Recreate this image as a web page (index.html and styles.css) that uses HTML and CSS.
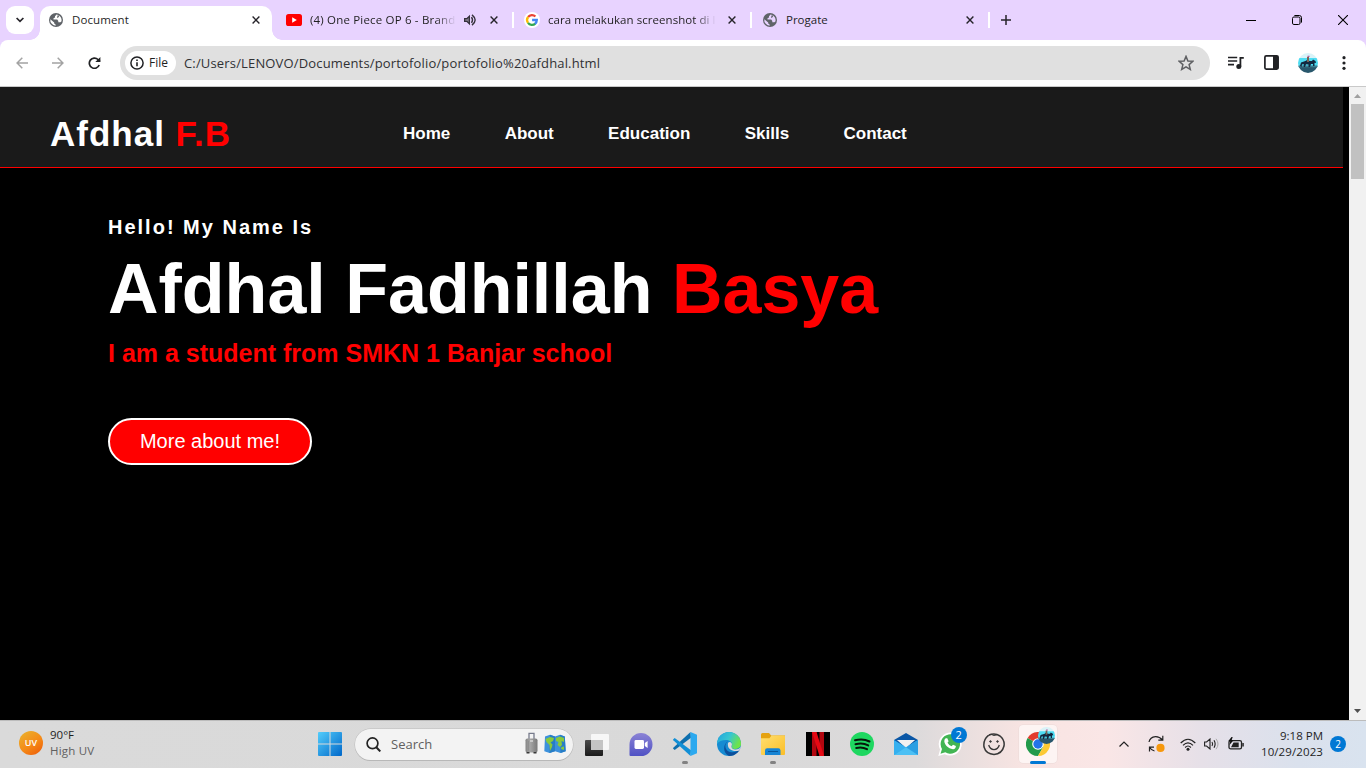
FILE: index.html
```html
<!DOCTYPE html>
<html lang="en">
<head>
<meta charset="utf-8">
<title>Document</title>
<link rel="stylesheet" href="styles.css">
</head>
<body>
<svg class="defs" width="0" height="0">
  <defs>
    <symbol id="globe" viewBox="0 0 14 14"><circle cx="7" cy="7" r="7" fill="#5f6368"/><path d="M7.6 1.5 6 3.2V4.6L4.5 5.2V6.6H8.2L9.3 8V9.2H11.4L12.4 8.6A5.7 5.7 0 0 0 7.6 1.5Z" fill="var(--hole)"/><path d="M1.3 6.2 5.2 9.4V10.6L6.6 11.6V12.7A5.8 5.8 0 0 1 1.3 6.2Z" fill="var(--hole)"/><path d="M8.6 2.2 10.4 2.6 9.6 4.3 8 4.9Z" fill="#5f6368"/></symbol>
    <symbol id="close" viewBox="0 0 8 8"><path d="M.6.6 7.4 7.4M7.4.6.6 7.4" stroke="#26242a" stroke-width="1.4"/></symbol>
    <symbol id="avatar" viewBox="0 0 20 20"><clipPath id="round"><circle cx="10" cy="10" r="10"/></clipPath><g clip-path="url(#round)"><path fill="#d9f3f8" d="M0 0h20v6H0z"/><path fill="#4edcf2" d="M0 5h20v8H0z"/><path fill="#28576c" d="M0 13h20v7H0z"/><path fill="#3c7f91" d="M0 12.6h20v1.6H0z"/><path fill="#13283f" d="M2 13 3 9.5 6 8.5 8 7.8 9.5 6.5 11.5 8H14L15 6.5 17.5 8 18 10 16.5 9.7V13H15V11H13L12 14H10.5V11.5L8 11.2 7 14H5.7V11L4 11.5 3.5 14Z"/><path fill="#7b6353" d="M9 4h2v5H9z"/><path fill="#b75da5" d="M9.5 2.8h2V4h-2z"/></g></symbol>
    <linearGradient id="win" x1="0" y1="0" x2="1" y2="1"><stop stop-color="#53cdfb"/><stop offset="1" stop-color="#0067c9"/></linearGradient>
    <linearGradient id="chat" x1="0" y1="0" x2="0" y2="1"><stop stop-color="#8b83d5"/><stop offset="1" stop-color="#5052c4"/></linearGradient>
    <linearGradient id="edgeTop" x1="0" y1="0" x2="1" y2=".4"><stop stop-color="#1fa3df"/><stop offset=".55" stop-color="#37c6d0"/><stop offset="1" stop-color="#6ee34b"/></linearGradient>
    <linearGradient id="folder" x1="0" y1="0" x2="1" y2="1"><stop stop-color="#ffdf70"/><stop offset="1" stop-color="#fbbe27"/></linearGradient>
    <linearGradient id="task" x1="0" y1="0" x2="0" y2="1"><stop stop-color="#4b4b4b"/><stop offset="1" stop-color="#1a1a1a"/></linearGradient>
    <linearGradient id="bag" x1="0" y1="0" x2="1" y2="0"><stop stop-color="#858585"/><stop offset=".4" stop-color="#a6a6a6"/><stop offset="1" stop-color="#7a7a7a"/></linearGradient>
  </defs>
</svg>

<div class="tabstrip">
  <div class="tab-search"><svg width="8" height="6" viewBox="0 0 8 6"><path d="M.6 1 4 4.4 7.4 1" fill="none" stroke="#26242a" stroke-width="1.7"/></svg></div>
  <div class="tab active">
    <svg class="favicon" width="14" height="14"><use href="#globe"/></svg>
    <span class="tab-title t-doc">Document</span>
    <svg class="close" width="8" height="8"><use href="#close"/></svg>
  </div>
  <div class="tab t2">
    <svg width="16" height="12" viewBox="0 0 16 12"><rect width="16" height="12" rx="2.6" fill="#f00"/><path d="M6.2 3.3v5.4L10.8 6Z" fill="#fff"/></svg>
    <span class="tab-title t-yt fade">(4) One Piece OP 6 - Brand</span>
    <svg class="sound" width="12" height="12" viewBox="0 0 12 12"><path d="M0 4h2.6L6 .8v10.4L2.6 8H0Z" fill="#35313b"/><path d="M1.3 5.2h1.9L4.7 3.8v4.4L3.2 6.8H1.3Z" fill="#88808f"/><path d="M7.5 3.2Q9.5 6 7.5 8.8M8 .9Q14.3 6 8 11.1" fill="none" stroke="#35313b" stroke-width="1.4"/></svg>
    <svg class="close" width="8" height="8"><use href="#close"/></svg>
  </div>
  <div class="tab t3">
    <svg width="16" height="16" viewBox="0 0 16 16"><circle cx="8" cy="8" r="8" fill="#fff"/><g fill="none" stroke-width="2.3"><path d="M4.1 5A4.9 4.9 0 0 1 11.4 4.5" stroke="#ea4335"/><path d="M4.1 5A4.9 4.9 0 0 0 4 10.8" stroke="#fbbc05"/><path d="M4 10.8A4.9 4.9 0 0 0 11.3 11.6" stroke="#34a853"/><path d="M8.1 8H12.8A4.8 4.8 0 0 1 11 11.8" stroke="#4285f4"/></g></svg>
    <span class="tab-title t-google fade">cara melakukan screenshot di l</span>
    <svg class="close" width="8" height="8"><use href="#close"/></svg>
  </div>
  <div class="tab t4">
    <svg class="favicon" width="14" height="14"><use href="#globe"/></svg>
    <span class="tab-title t-pro">Progate</span>
    <svg class="close" width="8" height="8"><use href="#close"/></svg>
  </div>
  <svg class="plus" width="10" height="10" viewBox="0 0 10 10"><path d="M5 0v10M0 5h10" stroke="#26242a" stroke-width="1.5"/></svg>
  <div class="win-controls">
    <svg width="10" height="11" viewBox="0 0 10 11"><path d="M0 5.5h10" stroke="#000"/></svg>
    <svg width="10" height="10" viewBox="0 0 10 10" fill="none" stroke="#000"><rect x=".5" y="2" width="7.5" height="7.5" rx="1.4"/><path d="M2.4.5H7.3Q9.5.5 9.5 2.7V7.6"/></svg>
    <svg width="10" height="10" viewBox="0 0 10 10"><path d="M0 0 10 10M10 0 0 10" stroke="#000" stroke-width="1.1"/></svg>
  </div>
</div>

<div class="toolbar-wrap">
<div class="toolbar">
  <svg class="nav-ic" width="12" height="12" viewBox="0 0 12 12"><path d="M12 6H1.2M6.3.8 1.1 6l5.2 5.2" fill="none" stroke="#a3a3a3" stroke-width="1.5"/></svg>
  <svg class="nav-ic" width="12" height="12" viewBox="0 0 12 12"><path d="M0 6H10.8M5.7.8 10.9 6l-5.2 5.2" fill="none" stroke="#a3a3a3" stroke-width="1.5"/></svg>
  <svg class="nav-ic" width="13" height="12" viewBox="0 0 13 12"><path d="M11.2 8A5.1 5.1 0 1 1 10 2.5L12 4.5" fill="none" stroke="#202124" stroke-width="1.7"/><path d="M12.4 0V5.1H7.3Z" fill="#202124"/></svg>
  <div class="omnibox">
    <div class="chip"><svg width="14" height="14" viewBox="0 0 14 14"><circle cx="7" cy="7" r="6.1" fill="none" stroke="#202124" stroke-width="1.5"/><path d="M7 6.2v4M7 3.6v1.5" stroke="#202124" stroke-width="1.6"/></svg><span class="file">File</span></div>
    <span class="url">C:/Users/LENOVO/Documents/portofolio/portofolio%20afdhal.html</span>
    <svg class="star" width="16" height="16" viewBox="0 0 16 16"><path d="M8 1.4 9.9 6 14.9 6.3 11.1 9.6 12.3 14.4 8 11.8 3.7 14.4 4.9 9.6 1.1 6.3 6.1 6Z" fill="none" stroke="#5f6063" stroke-width="1.5"/></svg>
  </div>
  <div class="actions">
    <svg width="16" height="14" viewBox="0 0 16 14"><path d="M0 1.5h9.2M0 5h9.2M0 8.6h6" stroke="#202124" stroke-width="1.6"/><path d="M11.5 10.5V.9h4.3v1.9h-2.5v7.7Z" fill="#202124"/><circle cx="10.8" cy="10.4" r="2.5" fill="#202124"/></svg>
    <svg width="15" height="15" viewBox="0 0 15 15"><rect x=".9" y=".9" width="13.2" height="13.2" rx="1.3" fill="none" stroke="#202124" stroke-width="1.7"/><path d="M9 1h5.2v13H9z" fill="#202124"/></svg>
    <svg width="20" height="20"><use href="#avatar"/></svg>
    <svg width="4" height="14" viewBox="0 0 4 14" fill="#202124"><circle cx="2" cy="1.7" r="1.6"/><circle cx="2" cy="7" r="1.6"/><circle cx="2" cy="12.3" r="1.6"/></svg>
  </div>
</div>
</div>

<div class="view">
  <main class="page">
    <nav class="navbar">
      <div class="brand">Afdhal <span class="red">F.B</span></div>
      <ul class="menu"><li>Home</li><li>About</li><li>Education</li><li>Skills</li><li>Contact</li></ul>
    </nav>
    <section class="hero">
      <h4 class="hello">Hello! My Name Is</h4>
      <h1 class="name">Afdhal Fadhillah <span class="red">Basya</span></h1>
      <h3 class="role">I am a student from SMKN 1 Banjar school</h3>
      <a class="more">More about me!</a>
    </section>
  </main>
  <div class="scrollbar">
    <svg width="7" height="4" viewBox="0 0 7 4"><path d="M0 4 3.5 0 7 4Z" fill="#a0a0a0"/></svg>
    <div class="thumb"></div>
    <svg class="down" width="7" height="4" viewBox="0 0 7 4"><path d="M0 0 3.5 4 7 0Z" fill="#505050"/></svg>
  </div>
</div>

<footer class="taskbar">
  <div class="weather">
    <div class="uv">UV</div>
    <div class="weather-text"><span class="temp">90°F</span><span class="uvtxt">High UV</span></div>
  </div>
  <div class="dock">
    <svg class="start" width="24" height="24" viewBox="0 0 24 24" fill="url(#win)"><path d="M0 1q0-1 1-1h10.5v11.5H0ZM12.5 0H23q1 0 1 1v10.5H12.5ZM0 12.5h11.5V24H1q-1 0-1-1ZM12.5 12.5H24V23q0 1-1 1H12.5Z"/></svg>
    <div class="search">
      <svg width="15" height="15" viewBox="0 0 15 15"><circle cx="6.5" cy="6.3" r="5.4" fill="none" stroke="#222" stroke-width="1.7"/><path d="m10.3 10.2 4 4.2" stroke="#222" stroke-width="2"/></svg>
      <span class="search-text">Search</span>
      <svg class="case" width="13" height="22" viewBox="0 0 13 22"><path d="M4 8V1.3h5V8" fill="none" stroke="#777b8c" stroke-width="1.3"/><rect x=".5" y="6.5" width="12" height="14" rx="1.8" fill="url(#bag)"/><path d="M3.5 9v9.500M9.500 9v9.500" stroke="#8c8c8c" stroke-width=".8"/><path d="M5 8h3v2H5z" fill="#c9c9c9"/><path d="M1.5 20h3v1.5h-3zM8.5 20h3v1.5h-3z" fill="#383838"/></svg>
      <svg width="22" height="20" viewBox="0 0 22 20"><path d="M1 2.5 6 .8l5 1.7 5-1.7L20.8 2.5 21.7 17.2 16.5 19 11 17.3 5.5 19 .3 17.2Z" fill="#3c91dc"/><path d="M6 .8 11 2.5V17.3L5.5 19ZM16 .8 20.8 2.5 21.7 17.2 16.5 19Z" fill="#287dc6"/><path d="M1.500 5 6 3 10 4 9 7 6.500 8.500 8.500 10.500 8 13 6 17 5.500 11 2.500 8ZM12 4 16 2.500 20 4V8L17.500 7 18 11 16 13 13.500 11 14.500 8 12 7ZM17.500 13 20 12.500V16L17 15Z" fill="#87c93d"/></svg>
    </div>
    <div class="app"><svg width="24" height="24" viewBox="0 0 24 24"><rect y="8" width="18" height="16" rx="1" fill="url(#task)"/><rect x="6" y="2" width="18" height="16" rx="1" fill="#f7f7f7"/><path d="M6 8h12v10H7q-1 0-1-1Z" fill="#c4c4c4"/></svg></div>
    <div class="app"><svg width="24" height="24" viewBox="0 0 24 24"><path d="M12 1A11.5 11.5 0 1 1 12 24H1.6Q.4 24 .5 22.8V12.5A11.5 11.5 0 0 1 12 1Z" fill="url(#chat)"/><rect x="5.5" y="8" width="9.5" height="9" rx="1.4" fill="#fff"/><path d="m15.8 11 2.8-2.1v7.2L15.8 14Z" fill="#fff"/></svg></div>
    <div class="app running"><svg width="24" height="24" viewBox="0 0 24 24"><path d="M17.5 0 .3 15.700Q-.2 16.300.3 16.800L1.700 18 18 5.700Z" fill="#0d6fae"/><path d="M18 18.200 1.700 6 .3 7.200Q-.2 7.700.3 8.300L17.500 24Z" fill="#118fd6"/><path d="M17.500 0 24 2.800V21.200L17.500 24Z" fill="#2ca9ef"/></svg></div>
    <div class="app"><svg width="24" height="24" viewBox="0 0 24 24"><clipPath id="ec"><circle cx="12" cy="12" r="12"/></clipPath><g clip-path="url(#ec)"><path d="M0 0h24v24H0z" fill="#168bd2"/><path d="M0 11V0H24V13.500C23 16 20.500 17 17.500 16.900 14.500 16.600 14 15 15 13.800 16 10.500 13 8 9 8 5 8 1.500 9.500 0 12Z" fill="url(#edgeTop)"/><path d="M11 9.300C7 12 7.500 18.500 13 20 17 21 20.500 19.500 24 16.500V24H12C5.500 21 6 12 11 9.300Z" fill="#0c4f9b"/><path d="M11.300 10.500C13 9 15.500 11 14.900 13 13.700 15.200 15 17.300 18 17.500 20.500 17.700 23 16.500 24 14.500V17.500C20 20.500 12 19 11 14Q10.500 11.500 11.300 10.500Z" fill="#dadada"/></g></svg></div>
    <div class="app running"><svg width="24" height="24" viewBox="0 0 24 24"><path d="M0 2.5Q0 1 1.5 1H8l2.200 2.400H24V10H0Z" fill="#e5a211"/><path d="M0 6.200H8.500L10.500 3.400H23q1 0 1 1V22q0 1-1 1H1q-1 0-1-1Z" fill="url(#folder)"/><path d="M4 23v-4.500Q4 16.300 6.200 16.300H17.300q2.200 0 2.200 2.200V23Z" fill="#1684d4"/><path d="M7 19.500h10" stroke="#07569b"/></svg></div>
    <div class="app"><svg width="24" height="24" viewBox="0 0 24 24"><path d="M0 0h24v24H0z"/><path d="M6 0h4.500v24H6zM13.500 0H18v24h-4.500z" fill="#b20710"/><path d="M6 0h4.500L18 24h-4.500Z" fill="#e50914"/></svg></div>
    <div class="app"><svg width="24" height="24" viewBox="0 0 24 24"><circle cx="12" cy="12" r="12" fill="#1ed760"/><path d="M5 8.300Q13 6 19.500 9.500M5.500 12.300Q12.500 10.300 18.200 13.400M6.200 16Q12 14.500 17 17.200" fill="none" stroke="#06170b" stroke-width="2" stroke-linecap="round"/></svg></div>
    <div class="app"><svg width="24" height="24" viewBox="0 0 24 24"><path d="M0 8 12 1 24 8V14H0Z" fill="#0a57a6"/><path d="M3 8h18l-9 8z" fill="#eee"/><path d="M0 8 12 15.300 24 8V23H0Z" fill="#35b0ef"/><path d="M3.500 8h17L12 14.500Z" fill="#f1f1f1"/><path d="M0 23 24 8V23Z" fill="#2b9fe3"/><path d="M0 23 12 15.300 24 23Z" fill="#4cc0f4"/></svg></div>
    <div class="app wa"><svg width="24" height="24" viewBox="0 0 24 24"><path d="M.3 24 2.100 17.600A11.500 11.500 0 1 1 6.700 22.200Z" fill="#fff"/><path d="M2.500 21.700 4 17A9.700 9.700 0 1 1 7.300 20.300Z" fill="#42b553"/><path d="M7.800 6.200 9.300 6.300 10.600 9.300 9.500 10.800Q10.800 13.300 13.600 14.300L15 12.700 17.900 14.100Q17.800 17.300 14.900 17.200C10.300 16.800 6.200 12.300 6.300 9Q6.400 7 7.800 6.200Z" fill="#fff"/></svg><span class="badge">2</span></div>
    <div class="app"><svg width="24" height="24" viewBox="0 0 24 24" fill="none" stroke="#383838"><path d="M7 3Q13 .7 18 4 23 8 22 14 20 22 12 22.500 4 22 2 15 1 8 6.200 3.700" stroke-width="1.500"/><path d="M5.800 3.700 9 2.300 12 3.500 15 2.800" stroke-width="1.100"/><circle cx="8.500" cy="9.500" r=".8" fill="#383838"/><circle cx="15.500" cy="9.500" r=".8" fill="#383838"/><path d="M6.700 13Q8 17.600 12 17.600T17.300 13" stroke-width="1.300"/></svg></div>
    <div class="app chrome"><svg width="24" height="24" viewBox="0 0 24 24"><path d="M12 12 1.600 6A12 12 0 0 1 22.400 6Z" fill="#e33b2e"/><path d="M12 12 1.600 6A12 12 0 0 0 12 24L17.200 15Z" fill="#229a4b"/><path d="M12 6H22.400A12 12 0 0 1 12 24L17.200 15Z" fill="#fcc934"/><circle cx="12" cy="12" r="5.800" fill="#fff"/><circle cx="12" cy="12" r="4.700" fill="#2474e8"/></svg><svg class="mini" width="17" height="17" viewBox="0 0 20 20"><use href="#avatar" width="20" height="20"/></svg></div>
  </div>
  <div class="tray">
    <svg class="up" width="10" height="6" viewBox="0 0 10 6"><path d="M.5 5.500 5 1l4.500 4.500" fill="none" stroke="#222" stroke-width="1.200"/></svg>
    <svg class="sync" width="17" height="18" viewBox="0 0 17 18"><path d="M1 7Q2 2 7.500 1.600 11.500 1.500 14.500 5M14.800.8V5.200H10.300M1.500 16.500V12.200H6M1.700 12.500Q3.500 15.500 6.500 16" fill="none" stroke="#222" stroke-width="1.200"/><circle cx="12.500" cy="12.900" r="4.100" fill="#f7980d"/></svg>
    <svg class="wifi" width="16" height="13" viewBox="0 0 16 13"><path d="M.7 5Q8-2.500 15.300 5M3 7.300Q8 2.300 13 7.300M5.100 9.500Q8 6.500 10.900 9.500" fill="none" stroke="#222" stroke-width="1.200"/><circle cx="8" cy="11.200" r="1.500" fill="#222"/></svg>
    <svg class="vol" width="15" height="12" viewBox="0 0 15 12"><path d="M.6 4h2L6 1v10L2.600 8h-2Z" fill="none" stroke="#222" stroke-width="1.100"/><path d="M8 4Q9.300 6 8 8M10 2.300Q12.300 6 10 9.700" fill="none" stroke="#222" stroke-width="1.100"/><path d="M12 .8Q16 6 12 11.200" fill="none" stroke="#aaa"/></svg>
    <svg class="bat" width="16" height="13" viewBox="0 0 16 13"><rect x="1" y="3.600" width="12.500" height="8.300" rx="1.700" fill="none" stroke="#222" stroke-width="1.300"/><path d="M3 10.200 5.500 5.400H10.700V10.200ZM14.300 6h1.500v3.600h-1.500z" fill="#222"/><path d="M3.500 0 .2 4.300h2L1.500 8 5.500 3.200H3.600L4.700 0Z" fill="#111"/></svg>
    <div class="clock"><span class="time">9:18 PM</span><span class="date">10/29/2023</span></div>
    <span class="notif">2</span>
  </div>
</footer>
</body>
</html>
```

FILE: styles.css
```css
* { box-sizing: border-box; }
body { margin: 0; width: 1366px; height: 768px; overflow: hidden; display: flex; flex-direction: column; background: #fff; font-family: "Open Sans", "Noto Sans", sans-serif; color: #1f1f1f; }
svg { display: block; flex: none; }
.defs { position: absolute; }
span { white-space: nowrap; }

/* Browser tabs */
.tabstrip { height: 40px; flex: none; display: flex; align-items: center; background: #e8d3ff; --hole: #e8d3ff; }
.tab-search { width: 28px; height: 28px; margin: 0 6px; border-radius: 9px; background: #fff; display: flex; align-items: center; justify-content: center; }
.tab { display: flex; align-items: center; height: 34px; font-size: 11.5px; }
.tab.active { position: relative; --hole: #fff; align-self: flex-end; width: 232px; padding: 0 12px 6px 9px; background: #fff; border-radius: 10px 10px 0 0; }
.tab.active::before, .tab.active::after { content: ""; position: absolute; bottom: 0; width: 10px; height: 10px; }
.tab.active::before { left: -10px; background: radial-gradient(circle at 0 0, transparent 9.5px, #fff 10px); }
.tab.active::after { right: -10px; background: radial-gradient(circle at 100% 0, transparent 9.5px, #fff 10px); }
.tab-title { line-height: 16px; margin-left: 9px; overflow: hidden; }
.t-doc { letter-spacing: .1px; }
.close { margin-left: auto; }
.t2, .t3, .t4 { height: 16px; border-right: 2px solid #fff; }
.t2 { width: 242px; padding: 0 14px; }
.t2 .tab-title { width: 146px; margin-left: 8px; letter-spacing: .18px; }
.sound { margin-left: 8px; }
.t3 { width: 238px; padding: 0 14px 0 10px; }
.t3 .tab-title { width: 168px; margin-left: 8px; letter-spacing: .05px; }
.t4 { width: 238px; padding: 0 14px 0 11px; }
.fade { -webkit-mask-image: linear-gradient(90deg, #000 calc(100% - 20px), transparent); mask-image: linear-gradient(90deg, #000 calc(100% - 20px), transparent); }
.plus { margin-left: 11px; }
.win-controls { margin-left: auto; padding-right: 18px; display: flex; gap: 36px; align-items: center; }

/* Address bar */
.toolbar-wrap { flex: none; background: #e8d3ff; }
.toolbar { height: 47px; display: flex; align-items: center; padding: 0 20px 1px 16px; background: #fff; border-bottom: 1px solid #c9c9c9; border-radius: 8px 8px 0 0; }
.nav-ic { margin-right: 24px; }
.nav-ic:nth-child(3) { margin-right: 19px; }
.omnibox { width: 1090px; height: 34px; border-radius: 17px; background: #e0e0e0; display: flex; align-items: center; padding: 0 16px 0 5px; }
.chip { width: 51px; height: 24px; border-radius: 12px; background: #fff; display: flex; align-items: center; padding-left: 5px; gap: 5px; font-size: 12px; }
.url { margin-left: 8px; font-size: 13px; letter-spacing: .16px; color: #303134; }
.star { margin-left: auto; }
.actions { margin-left: auto; display: flex; align-items: center; }
.actions svg:nth-child(1) { margin-right: 20px; }
.actions svg:nth-child(2) { margin-right: 19px; }
.actions svg:nth-child(3) { margin-right: 24px; }

/* Portfolio page */
.view { height: 633px; flex: none; display: flex; background: #000; font-family: "Liberation Sans", Arial, sans-serif; }
.page { flex: 1; color: #fff; }
.red { color: #f00; }
.navbar { width: 1343px; height: 81px; display: flex; align-items: center; padding: 14px 0 0 50px; background: #1a1a1a; border-bottom: 1px solid #f00; }
.brand { width: 353px; font-size: 35px; font-weight: 700; letter-spacing: 1px; }
.menu { list-style: none; margin: 0; padding: 0; display: flex; gap: 54.4px; font-size: 17px; font-weight: 700; }
.hero { padding: 47px 0 0 108px; display: flex; flex-direction: column; align-items: flex-start; }
.hello { margin: 0; font-size: 20px; line-height: 24px; letter-spacing: 2px; }
.name { margin: 10px 0 0; font-size: 70px; line-height: 80px; white-space: nowrap; }
.role { margin: 9px 0 0; font-size: 25px; line-height: 30px; color: #f00; }
.more { margin-top: 49.5px; width: 204px; height: 47px; padding-top: 1px; border: 2px solid #fff; border-radius: 24px; background: #f00; font-size: 20px; display: flex; align-items: center; justify-content: center; }
.scrollbar { width: 17px; background: #f1f1f1; display: flex; flex-direction: column; align-items: center; padding: 7px 0; }
.thumb { width: 13px; height: 75px; margin-top: 6px; background: #c1c1c1; }
.down { margin-top: auto; }

/* Taskbar */
.taskbar { height: 48px; flex: none; display: flex; align-items: center; padding-bottom: 1px; border-top: 1px solid #bcbcbc; background: linear-gradient(90deg, #dadada 0, #d9d9d9 55%, #dcdadb 67%, #f8e4e2 75%, #fae6e6 81%, #e6e0e8 88%, #dae1ed 95%, #d9e3ef 100%); }
.weather { width: 317.5px; padding: 0 0 2px 19px; display: flex; align-items: center; }
.uv { width: 24px; height: 24px; border-radius: 50%; background: linear-gradient(145deg, #e9b52f, #f58a17 55%, #ec5809); color: #fff; font-size: 9px; font-weight: 600; line-height: 24px; text-align: center; }
.weather-text { margin-left: 7px; display: flex; flex-direction: column; align-items: flex-start; font-size: 11.5px; line-height: 16px; }
.uvtxt { color: #606060; letter-spacing: .2px; }
.dock { display: flex; align-items: center; }
.search { width: 218px; height: 31px; margin: 0 2px 0 13.5px; border-radius: 16px; background: #f3f3f3; box-shadow: 0 0 0 .5px #bbb, 0 1px 0 #b5b5b5; display: flex; align-items: center; padding: 0 7px 0 11px; }
.search-text { margin-left: 10px; font-size: 13px; color: #606060; }
.case { margin: 0 6px 2px auto; }
.app { position: relative; width: 44.1px; height: 40px; display: flex; align-items: center; justify-content: center; }
.running::after { content: ""; position: absolute; bottom: 0; width: 6px; height: 3px; border-radius: 2px; background: #828282; }
.badge { position: absolute; left: 23px; top: 3px; width: 16px; height: 16px; border-radius: 50%; background: #0078d4; color: #fff; font-size: 11px; line-height: 16px; text-align: center; }
.chrome::before { content: ""; position: absolute; width: 38px; height: 38px; border-radius: 4px; background: #fdf4f3; box-shadow: 0 0 0 .5px #ead9d8; }
.chrome svg { position: relative; }
.chrome .mini { position: absolute; left: 22px; top: 3px; }
.chrome::after { content: ""; position: absolute; bottom: 0; width: 16px; height: 3px; border-radius: 2px; background: #0078d4; }
.tray { margin-left: auto; padding-right: 20px; display: flex; align-items: center; }
.up { margin-right: 19px; }
.sync { margin-right: 15px; }
.wifi { margin-right: 8px; }
.vol { margin-right: 9px; }
.bat { margin: 0 0 2px; }
.clock { width: 79px; margin-bottom: 1px; display: flex; flex-direction: column; align-items: flex-end; font-size: 11.5px; line-height: 16px; }
.date { letter-spacing: .1px; }
.notif { margin-left: 7px; width: 16px; height: 16px; border-radius: 50%; background: #0078d4; color: #fff; font-size: 10px; line-height: 16px; text-align: center; }
```
